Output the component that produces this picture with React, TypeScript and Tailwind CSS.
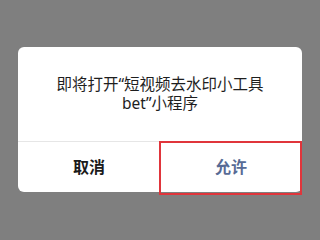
import React from "react";

export default function App() {
  return (
    <div
      className="w-[320px] h-[240px] bg-[#7f7f7f] pt-[47px] px-[18px]"
      style={{ fontFamily: '"Noto Sans", "Noto Sans CJK SC", sans-serif' }}
    >
      {/* Dialog */}
      <div className="relative bg-white rounded-[6px] h-[145px] flex flex-col">
        <div className="h-[94px] flex flex-col items-center justify-center text-[15.5px] leading-[19px] text-[#1e1e1e] text-center">
          <span>即将打开“短视频去水印小工具</span>
          <span>bet”小程序</span>
        </div>
        <div className="h-px bg-[#e6e6e6]" />
        <div className="flex-1 flex">
          <button className="flex-1 flex items-center justify-center text-[16px] font-bold text-[#1a1a1a]">
            取消
          </button>
          <button className="flex-1 flex items-center justify-center text-[16px] font-bold text-[#576b95]">
            允许
          </button>
        </div>
        {/* highlight box */}
        <div className="absolute left-[141px] top-[94px] w-[143px] h-[54px] border-2 border-[#e0353b]" />
      </div>
    </div>
  );
}
